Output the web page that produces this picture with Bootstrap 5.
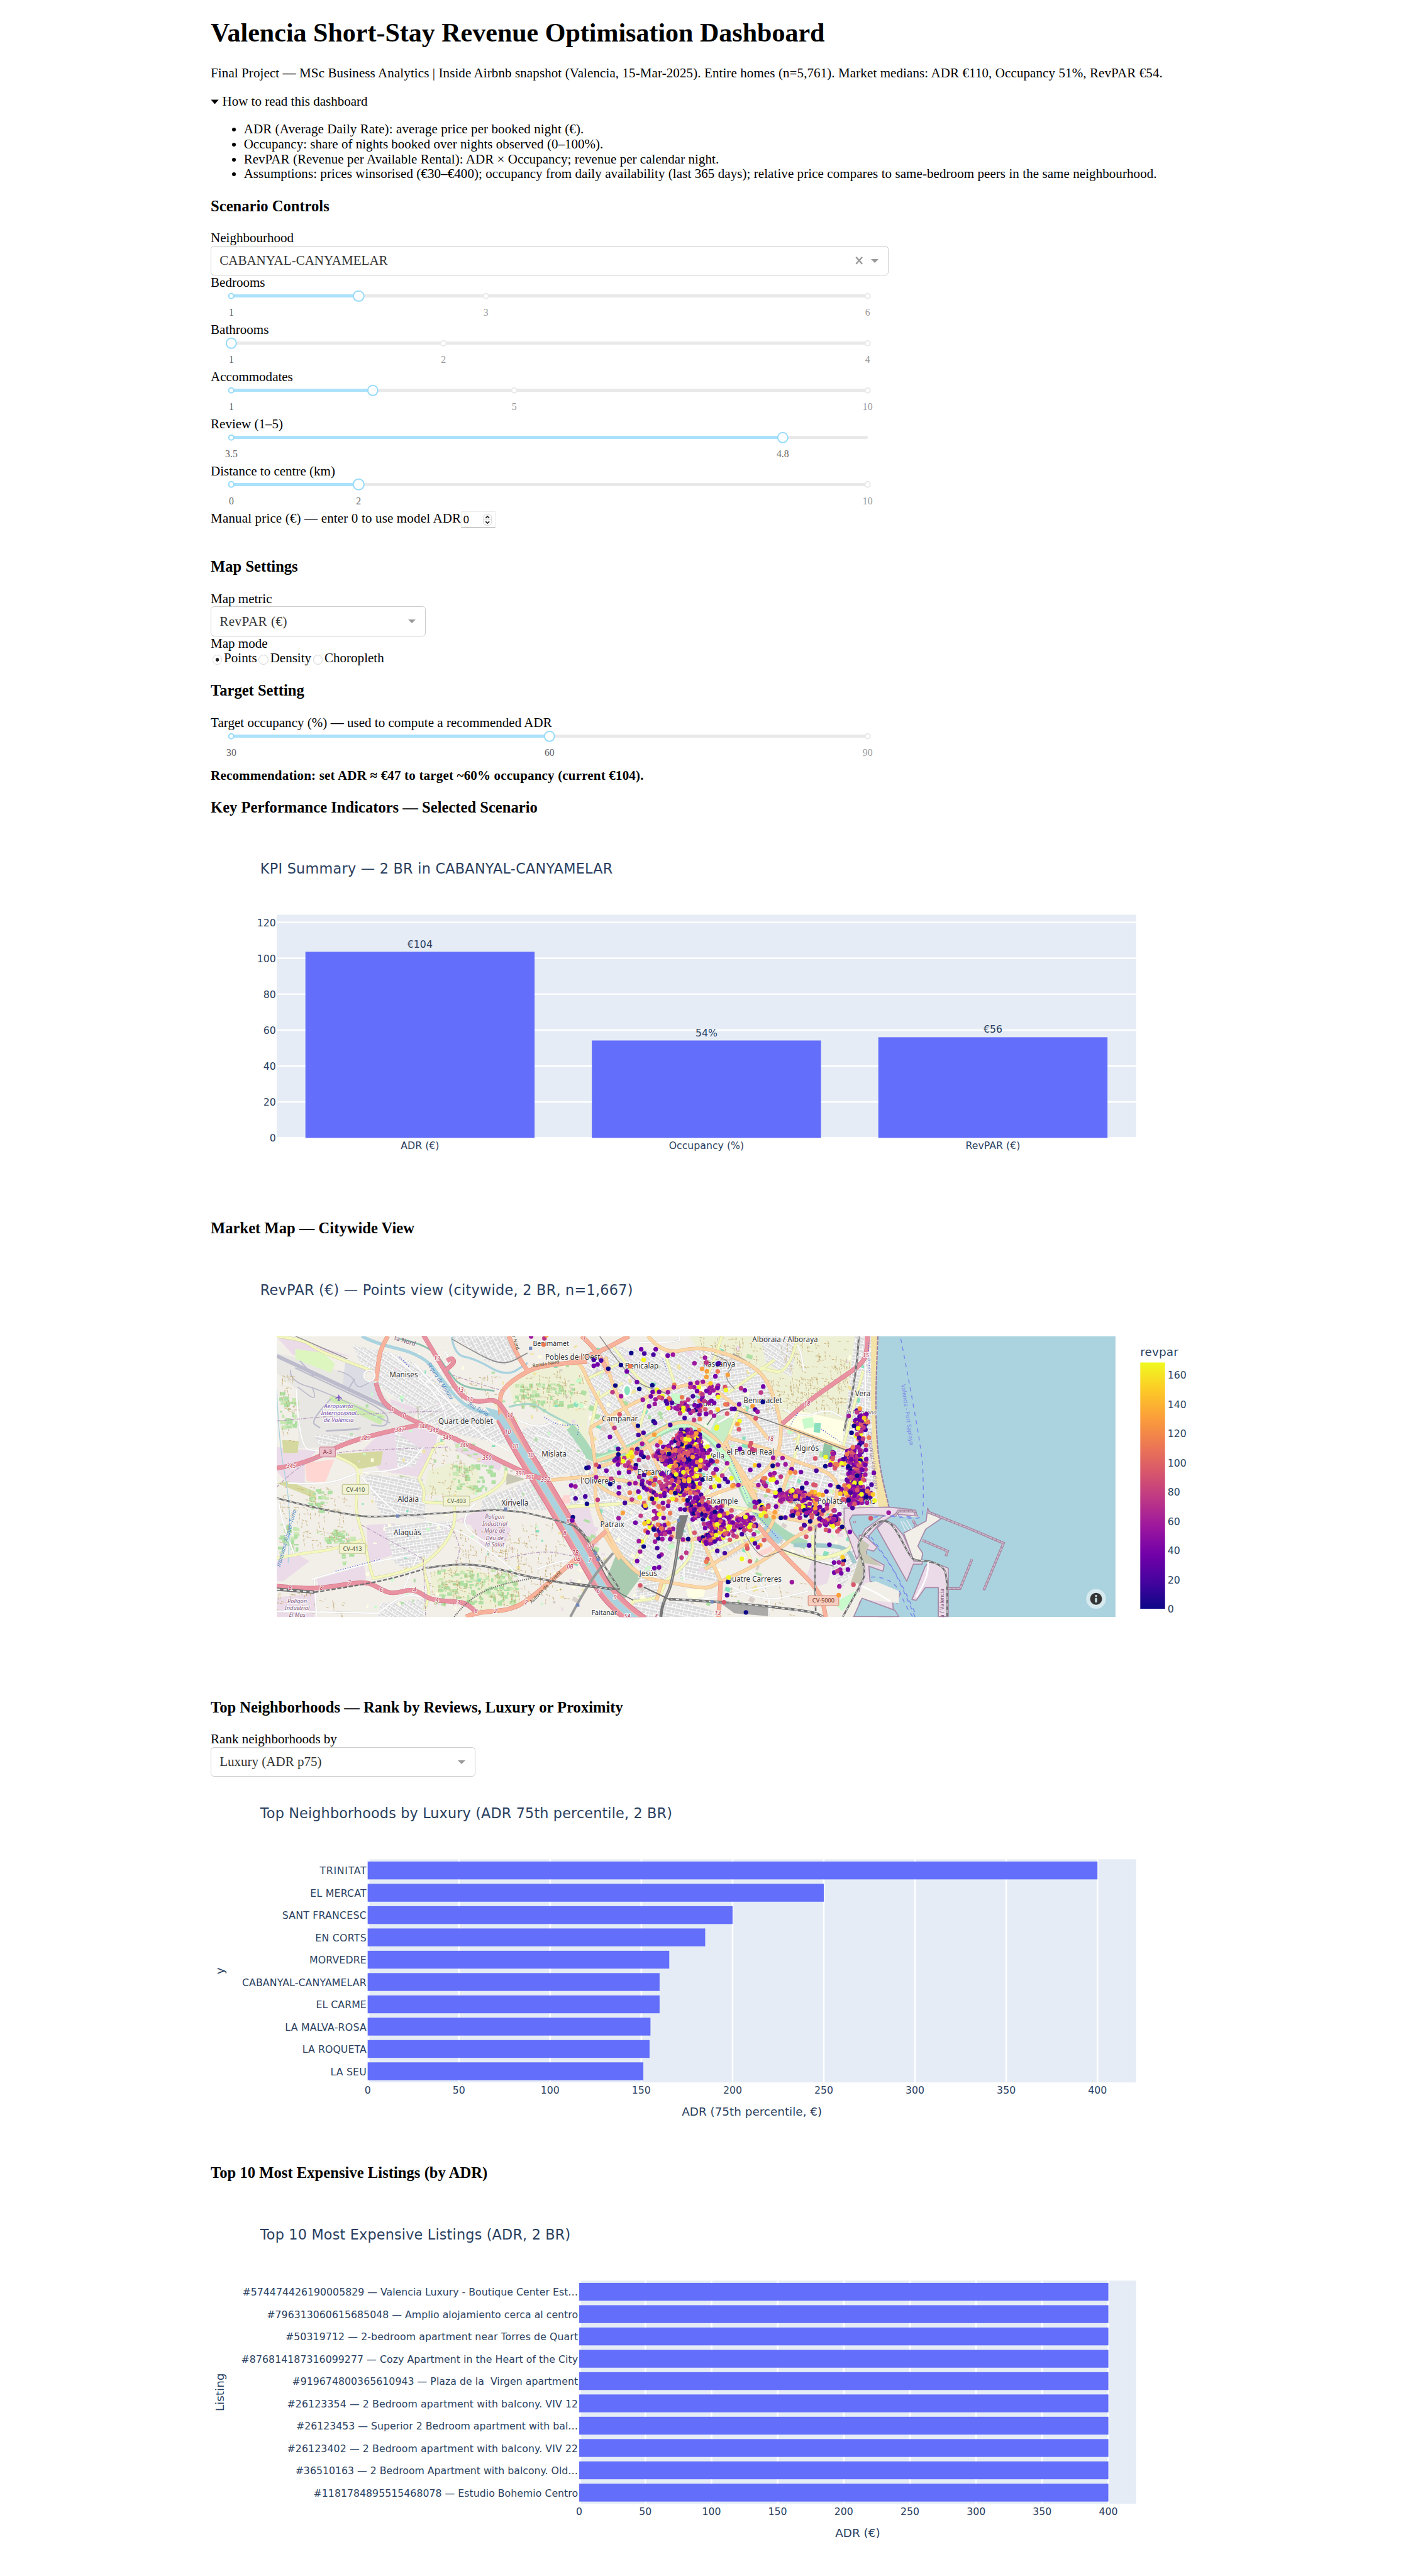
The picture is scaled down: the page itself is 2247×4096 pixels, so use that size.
<!DOCTYPE html>
<html lang="en">
<head>
<meta charset="utf-8">
<title>Valencia Short-Stay Revenue Optimisation Dashboard</title>
<link href="https://cdn.jsdelivr.net/npm/bootstrap@5.3.0/dist/css/bootstrap.min.css" rel="stylesheet">
<style>
/* 1rem = 10 layout units */
html{font-size:13.1404px}
body{font-family:"Liberation Serif",serif;font-size:1.6rem;line-height:1.8rem;color:#000;background:#fff}
.dash{width:120rem;max-width:none}
h1.title-main{font-size:3.2rem;line-height:3.7rem;font-weight:700;margin:2.144rem 0}
h3.sec{font-size:1.872rem;line-height:2.2rem;font-weight:700;margin:1.872rem 0}
.fit{white-space:nowrap}
.intro{margin:0 0 1.6rem}
.how summary{margin-bottom:1.6rem;list-style:none}
.how summary svg{width:1rem;height:.6rem;margin-right:.4rem}
.how ul{padding-left:4rem;margin:0}
.controls{width:82rem}
.pick{height:3.6rem;border:1px solid #ccc;border-radius:.4rem;padding:.05rem 1.1rem 0 1rem;color:#333}
.pick .tri{width:0;height:0;border:.5rem solid transparent;border-top-color:#999;border-bottom-width:0}
.pick svg{width:.95rem;height:.95rem;margin-right:.95rem}
.w26{width:26rem}.w32{width:32rem}
.sl{height:3.9rem;padding:.5rem 2.5rem 0}
.rail{position:relative;height:.4rem;background:#e9e9e9;border-radius:.6rem}
.fill{height:100%;background:#abe2fb;border-radius:.6rem}
.stop,.knob{position:absolute;border-radius:50%;background:#fff;transform:translate(-50%,-50%);top:50%}
.stop{width:.8rem;height:.8rem;border:.2rem solid #e9e9e9}
.stop.on{border-color:#96dbfa}
.knob{width:1.4rem;height:1.4rem;border:.2rem solid #96dbfa}
.tick{position:absolute;top:1.3rem;font-size:1.2rem;line-height:1.8rem;color:#999;transform:translateX(-50%)}
.tick.on{color:#666}
.manual{height:3.82rem;padding-top:.04rem}
.num{width:4.2rem;height:2rem;border:1px solid #ececec;border-bottom:1px solid #bbb;padding:0 .35rem 0 .2rem;font:1.25rem/1.9rem "Liberation Sans",sans-serif}
.num svg{width:1.1rem;height:1.45rem}
.modes{height:1.856rem}
.dot{width:1.2rem;height:1.2rem;border-radius:50%;border:1px solid #d8d8d8;background:radial-gradient(circle,#fff 40%,#f4f4f4);margin:.45rem .2rem 0 .2rem}
.dot.on{background:radial-gradient(circle,#222 0 26%,#fff 32%)}
.rec{padding-top:.68rem}
svg.plot{display:block;width:100%;font-family:"DejaVu Sans",Verdana,sans-serif;fill:#2a3f5f}
svg.plot text{white-space:pre}
</style>
<script src="https://cdn.jsdelivr.net/npm/bootstrap@5.3.0/dist/js/bootstrap.bundle.min.js"></script>
</head>
<body>
<main class="dash mx-auto overflow-hidden">
  <h1 class="title-main"><span class="fit" data-w="743">Valencia Short-Stay Revenue Optimisation Dashboard</span></h1>
  <p class="intro"><span class="fit" data-w="1152">Final Project — MSc Business Analytics | Inside Airbnb snapshot (Valencia, 15-Mar-2025). Entire homes (n=5,761). Market medians: ADR €110, Occupancy 51%, RevPAR €54.</span></p>
  <details class="how" open>
    <summary class="d-flex align-items-center"><svg viewBox="0 0 10 6"><path d="M.3.3h9.4L5 5.8z"/></svg><span class="fit" data-w="352">How to read this dashboard</span></summary>
    <ul>
      <li><span class="fit" data-w="411.5">ADR (Average Daily Rate): average price per booked night (€).</span></li>
      <li><span class="fit" data-w="435">Occupancy: share of nights booked over nights observed (0–100%).</span></li>
      <li><span class="fit" data-w="575">RevPAR (Revenue per Available Rental): ADR × Occupancy; revenue per calendar night.</span></li>
      <li><span class="fit" data-w="1105">Assumptions: prices winsorised (€30–€400); occupancy from daily availability (last 365 days); relative price compares to same-bedroom peers in the same neighbourhood.</span></li>
    </ul>
  </details>

  <section class="controls">
    <h3 class="sec">Scenario Controls</h3>
    <div>Neighbourhood</div>
    <div class="pick d-flex align-items-center"><span class="me-auto">CABANYAL-CANYAMELAR</span>
      <svg viewBox="0 0 9 9" stroke="#999" stroke-width="1.7"><path d="M1 .5 8 8.5M8 .5 1 8.5"/></svg><i class="tri"></i></div>
    <div>Bedrooms</div><div class="sl" data-v="20" data-m="0:1,40:3,100:6"></div>
    <div>Bathrooms</div><div class="sl" data-v="0" data-m="0:1,33.333:2,100:4"></div>
    <div>Accommodates</div><div class="sl" data-v="22.222" data-m="0:1,44.444:5,100:10"></div>
    <div>Review (1–5)</div><div class="sl" data-v="86.667" data-m="0:3.5,86.667:4.8"></div>
    <div>Distance to centre (km)</div><div class="sl" data-v="20" data-m="0:0,20:2,100:10"></div>
    <div class="manual d-flex align-items-start"><span class="fit" data-w="303">Manual price (€) — enter 0 to use model ADR</span>
      <span class="num d-flex align-items-center justify-content-between">0
        <svg viewBox="0 0 11 14.5"><rect x=".5" y=".5" width="10" height="13.5" rx="4.5" fill="#fff" stroke="#ddd"/><path d="M.5 7.2h10" stroke="#ddd"/><path d="M3.3 5.3 5.5 3 7.7 5.3M3.3 9.2 5.5 11.5 7.7 9.2" fill="none" stroke="#222" stroke-width="1.3"/></svg></span>
    </div>
    <h3 class="sec">Map Settings</h3>
    <div>Map metric</div>
    <div class="pick w26 d-flex align-items-center"><span class="me-auto fit" data-w="82">RevPAR (€)</span><i class="tri"></i></div>
    <div>Map mode</div>
    <div class="modes d-flex"><i class="dot on"></i><span>Points</span><i class="dot"></i><span>Density</span><i class="dot"></i><span>Choropleth</span></div>
    <h3 class="sec">Target Setting</h3>
    <div><span class="fit" data-w="413">Target occupancy (%) — used to compute a recommended ADR</span></div>
    <div class="sl" data-v="50" data-m="0:30,50:60,100:90"></div>
    <div class="rec fw-bold"><span class="fit" data-w="524">Recommendation: set ADR ≈ €47 to target ~60% occupancy (current €104).</span></div>
  </section>

  <h3 class="sec"><span class="fit" data-w="395.5">Key Performance Indicators — Selected Scenario</span></h3>
  <svg class="plot" id="kpi" viewBox="0 0 1200 450"></svg>
  <h3 class="sec"><span class="fit" data-w="246.5">Market Map — Citywide View</span></h3>
  <svg class="plot" id="map" viewBox="0 0 1200 520"></svg>
  <h3 class="sec"><span class="fit" data-w="499">Top Neighborhoods — Rank by Reviews, Luxury or Proximity</span></h3>
  <div>Rank neighborhoods by</div>
  <div class="pick w32 d-flex align-items-center"><span class="me-auto">Luxury (ADR p75)</span><i class="tri"></i></div>
  <svg class="plot" id="lux" viewBox="0 0 1200 450"></svg>
  <h3 class="sec"><span class="fit" data-w="335">Top 10 Most Expensive Listings (by ADR)</span></h3>
  <svg class="plot" id="top" viewBox="0 0 1200 450"></svg>
</main>

<script>
// Sliders
document.querySelectorAll('.sl').forEach(s=>{
  const v=+s.dataset.v;let h=`<div class="rail"><div class="fill" style="width:${v}%"></div>`;
  s.dataset.m.split(',').forEach(m=>{const [p,t]=m.split(':'),on=+p<=v?' on':'';
    h+=`<i class="stop${on}" style="left:${p}%"></i><span class="tick${on}" style="left:${p}%">${t}</span>`});
  s.innerHTML=h+`<i class="knob" style="left:${v}%"></i></div>`;
});
// Spread a line's letters to its column width
const U=13.1404/10;
document.querySelectorAll('.fit[data-w]').forEach(e=>{
  const d=e.dataset.w*U-e.getBoundingClientRect().width,k=d/e.textContent.length;
  if(Math.abs(k)<1)e.style.letterSpacing=k+'px';
});
const T=(x,y,s,size,o='')=>`<text x="${x}" y="${y}" font-size="${size}" ${o}>${s}</text>`;
const R=(x,y,w,h,f)=>`<rect x="${x}" y="${y}" width="${w}" height="${h}" fill="${f}"/>`;
const title=(s,w)=>T(60,50.4,s,17,`textLength="${w}"`);
// KPI chart
(()=>{let h=title('KPI Summary — 2 BR in CABANYAL-CANYAMELAR',426.5)+R(80,100,1040,270,'#e5ecf6');
 for(let v=0;v<=120;v+=20){const y=370-v*2.1725;h+=R(80,y-1,1040,v?2:1,'#fff')+T(79,y+4.5,v,12,'text-anchor="end"')}
 [['ADR (€)',103.6,'€104'],['Occupancy (%)',54.2,'54%'],['RevPAR (€)',56,'€56']].forEach(([n,v,l],i)=>{
  const c=80+346.667*(i+.5),y=370-v*2.1725;h+=R(c-138.67,y,277.33,v*2.1725,'#636efa')+T(c,y-5.2,l,12,'text-anchor="middle"')+T(c,383.8,n,12,'text-anchor="middle"')});
 kpi.innerHTML=h})();
// Horizontal bar charts
function hbar(id,ttl,tw,x0,k,names,vals,xl,yl){
 let h=title(ttl,tw)+R(x0,100,1120-x0,270,'#e5ecf6');
 for(let v=0;v<=400;v+=50){h+=R(x0+v*k-(v?1:0),100,2,270,'#fff')+T(x0+v*k,383.6,v,12,'text-anchor="middle"')}
 names.forEach((n,i)=>{h+=R(x0,102.7+27*i,vals[i]*k,21.6,'#636efa')+T(x0-1.5,118.3+27*i,n[0],12,`text-anchor="end" textLength="${n[1]}"`)});
 h+=T((x0+1120)/2,410.4,xl,14,`text-anchor="middle"`)+`<text transform="translate(16 235) rotate(-90)" font-size="14" text-anchor="middle">${yl}</text>`;
 document.getElementById(id).innerHTML=h}
hbar('lux','Top Neighborhoods by Luxury (ADR 75th percentile, 2 BR)',498.5,190,2.208,
 [['TRINITAT',56.5],['EL MERCAT',68],['SANT FRANCESC',102],['EN CORTS',62],['MORVEDRE',69],['CABANYAL-CANYAMELAR',150.5],['EL CARME',61],['LA MALVA-ROSA',98.5],['LA ROQUETA',77.5],['LA SEU',43.5]],
 [400,250,200,185,165.3,160,160,155,154.5,151.1],'ADR (75th percentile, €)','y');
hbar('top','Top 10 Most Expensive Listings (ADR, 2 BR)',375.5,446,1.601,
 [['#574474426190005829 — Valencia Luxury - Boutique Center Est…',406],['#796313060615685048 — Amplio alojamiento cerca al centro',376.5],['#50319712 — 2-bedroom apartment near Torres de Quart',354],['#876814187316099277 — Cozy Apartment in the Heart of the City',407.5],['#919674800365610943 — Plaza de la  Virgen apartment',346],['#26123354 — 2 Bedroom apartment with balcony. VIV 12',352],['#26123453 — Superior 2 Bedroom apartment with bal…',341],['#26123402 — 2 Bedroom apartment with balcony. VIV 22',352],['#36510163 — 2 Bedroom Apartment with balcony. Old…',342],['#1181784895515468078 — Estudio Bohemio Centro',320]],
 Array(10).fill(400),'ADR (€)','Listing');

// ---- Market map: three survey sheets (west, centre, east) projected on one frame
let seed=7;const rnd=()=>(seed=(seed*16807)%2147483647)/2147483647;
const P={A:[.28699,-35],B:[.2551,355],C:[.28699,705]};
const px=(s,x,y)=>[+(x*P[s][0]+P[s][1]).toFixed(1),+(y*.24235-16).toFixed(1)];
const pts=(s,str)=>str.trim().split(/\s+/).map(q=>px(s,...q.split(',').map(Number)));
const poly=(s,str,f,o='')=>`<polygon points="${pts(s,str).join(' ')}" fill="${f}" ${o}/>`;
// smoothed line through the given vertices
const path=(s,str)=>{const p=pts(s,str);let d='M'+p[0];for(let i=1;i<p.length-1;i++)d+=`Q${p[i]} ${(p[i][0]+p[i+1][0])/2},${(p[i][1]+p[i+1][1])/2}`;return d+'L'+p[p.length-1]};
const ln=(s,str,c,w,o='')=>`<path d="${path(s,str)}" fill="none" stroke="${c}" stroke-width="${w}" stroke-linejoin="round" ${o}/>`;
let m='<defs><clipPath id="frame"><rect width="1015" height="340"/></clipPath>';
[[0,12,5],[1,-28,4.6],[2,33,4.2],[3,62,5.2],[4,-8,4.4]].forEach(([i,a,s])=>m+=`<pattern id="g${i}" width="${s*2}" height="${s*1.5}" patternUnits="userSpaceOnUse" patternTransform="rotate(${a})"><rect width="20" height="20" fill="#dcdbdc"/><path d="M0 0H20M0 ${s*.75}H20M0 0V20M${s*1.25} 0V${s*.75}" stroke="#fff" stroke-width="1.2"/></pattern>`);
m+='<linearGradient id="bar" x1="0" y1="1" x2="0" y2="0">'+['0d0887','46039f','7201a8','9c179e','bd3786','d8576b','ed7953','fb9f3a','fdca26','f0f921'].map((c,i)=>`<stop offset="${i/9}" stop-color="#${c}"/>`).join('')+'</linearGradient></defs>';
m+=title('RevPAR (€) — Points view (citywide, 2 BR, n=1,667)',451);
m+='<g transform="translate(80 100)" clip-path="url(#frame)">'+R(0,0,1015,340,'#f2efe9');
// fields
const field='#eef0d5',ind='#ebdbe8';
m+=poly('B','560,66 1360,66 1300,540 1000,500 890,220 600,120',field)+poly('A','1100,300 1190,240 1400,190 1450,300 1430,520 1440,640 1380,560 1290,480 1180,400 1120,400',field)
+poly('A','770,1250 880,1210 1140,1290 1150,1400 960,1440 900,1390 780,1350',field)+poly('A','850,700 975,720 970,860 740,860 760,740',field)+poly('B','1000,1140 1150,1030 1330,1010 1400,1300 1300,1468 900,1468 720,1300','#f2efe9');
// industry
['122,70 230,90 440,170 320,150 190,160','122,620 290,640 240,700 240,800 165,800 122,740','560,550 720,520 800,560 790,610 720,770 560,740 480,640','860,560 1080,690 1060,740 880,640','122,1190 200,1150 260,1190 150,1290 122,1290','500,1010 620,1000 610,1160 510,1200','870,990 990,930 1110,1030 1080,1120 990,1120 940,1010','290,1280 490,1210 500,1280 300,1320','1320,930 1440,920 1480,1110 1420,1130 1360,1000','122,1370 290,1350 280,1468 122,1468','600,380 720,430 700,470 610,430'].forEach(q=>m+=poly('A',q,ind));
// airport
m+=poly('A','122,150 250,190 540,300 600,400 700,450 700,510 380,620 215,625 205,330 122,250','#e8e7e3')
+poly('A','410,200 480,210 560,330 580,400 400,310','#dcdce4')
+poly('A','355,360 580,465 560,510 340,385','#cdebb0')+poly('A','200,130 320,150 368,205 350,250 200,180','#ddf6c0')
+ln('A','122,165 600,430','#bbbbcc',4.6)+ln('A','200,225 340,305 590,440 590,520 520,510','#bbbbcc',1.6)+ln('A','180,235 175,290 330,345 600,500','#bbbbcc',1.4)+ln('A','270,320 300,400 210,320','#bbbbcc',1.2)+ln('A','330,540 470,530','#bbbbcc',2)+ln('A','350,380 260,490 305,525','#bbbbcc',1.6)+ln('A','380,240 440,260 460,330 510,300','#bbbbcc',1.2)+ln('A','220,190 280,270','#bbbbcc',1.5)+ln('A','450,280 420,340','#bbbbcc',1.5);
// patches of scrub, retail and brownfield
[['A','375,655 570,640 560,710 470,730','#d6d99f'],['A','145,585 215,590 210,650 150,650','#d6d99f'],['A','122,800 290,880 280,840 170,790','#d6d99f'],['A','240,700 365,682 325,800 248,790','#ffd6d1'],['A','710,410 810,450 790,480 720,488','#c7c7b4'],['A','1090,750 1170,780 1090,810','#c7c7b4'],['A','640,760 705,780 700,815 640,800','#c2d3a8'],['A','1330,860 1370,860 1360,900 1320,905','#ffd6d1'],['A','1000,66 1110,66 1110,150 1050,110','#e3cfd2']].forEach(a=>m+=poly(...a));
// built-up areas
[['A','440,110 600,150 700,200 830,330 850,400 700,420 620,380 545,300 470,190',2],['A','720,420 860,400 1000,430 1060,530 1130,620 900,560 720,480',1],['A','850,66 1100,66 1150,180 1080,210 1000,190 930,120',3],['A','1130,540 1290,490 1430,620 1460,715 1270,775 1190,640',2],['A','990,880 1200,780 1260,935 980,930',3],['A','490,755 740,780 750,980 560,960',0],['A','570,1010 870,990 860,1050 740,1180 680,1240 620,1200',4],['A','280,560 450,560 450,600 300,610',0],['A','560,1400 740,1380 740,1468 550,1468',2],['A','620,540 740,640 700,720 630,720',0],
['B','60,150 180,110 440,150 640,120 720,150 640,290 470,350 350,400 160,480 100,400',2],['B','150,480 400,350 660,300 760,400 600,500 420,540 270,640 120,680',1],['B','0,700 130,690 280,650 420,560 470,700 440,860 330,900 0,905',3],['B','440,560 560,490 720,610 800,760 700,860 560,900 440,860 420,700',2],['B','640,290 720,150 900,230 1000,500 950,630 740,600 680,450',4],['B','740,600 950,630 1270,760 1270,900 1150,970 880,920',0],['B','1000,510 1310,630 1270,760 1060,690 990,640',4],['B','1300,540 1350,66 1440,66 1440,920 1300,1000 1270,900 1290,640',0],['B','120,900 440,870 540,900 500,1080 450,1290 240,1180 160,1030',2],['B','540,890 860,930 940,1060 720,1200 620,1070 520,1080',3],['B','530,1090 620,1080 710,1290 520,1280',0],['B','330,1270 440,1290 400,1468 300,1390',4],['B','1240,1150 1350,1100 1370,1200 1290,1330 1240,1250',1],['B','270,1400 540,1390 680,1440 680,1468 270,1468',0],['B','700,940 860,930 960,1060 850,1100',1],['B','900,66 1080,66 1050,270 930,200',2]].forEach(([s,q,g])=>m+=poly(s,q,`url(#g${g})`));
// small plots of gardens, schools and courts
const cols=['#aedfa3','#c8facc','#ffffe5','#ffffe5','#88e0be','#f0e4a0','#d9d0c9','#ebdbe8'];
for(let i=0;i<420;i++){const x=rnd()*1380+10,y=rnd()*1300+110;if(x>900&&y>1150||x>870&&x<1300&&y<500)continue;const [a,b]=px('B',x,y);m+=`<rect x="${a}" y="${b}" width="${(2+rnd()*6).toFixed(1)}" height="${(2+rnd()*4.5).toFixed(1)}" fill="${cols[i%8]}" transform="rotate(${[20,-25,30,10][i%4]} ${a} ${b})"/>`}
[[125,330,75,190],[125,1000,80,150],[290,1030,150,70],[390,1140,40,70],[860,700,170,130],[790,1230,340,170],[240,830,100,100],[1120,300,250,110],[870,600,80,70]].forEach(([x,y,w,h])=>{for(let i=0;i<w*h/420;i++){const [a,b]=px('A',x+rnd()*w,y+rnd()*h);m+=R(a,b,(2+rnd()*5).toFixed(1),(1.5+rnd()*4).toFixed(1),i%3?'#aedfa3':'#c9e7b3')}});
for(let i=0;i<170;i++){const [a,b]=px('A',430+rnd()*980,150+rnd()*1290);m+=R(a,b,(1.5+rnd()*3).toFixed(1),(1.5+rnd()*3).toFixed(1),cols[i%8])}
// farm tracks
const track=(s,x,y,w,h,n)=>{let d='';for(let i=0;i<n;i++){const [a,b]=px(s,x+rnd()*w,y+rnd()*h),v=rnd()<.5;d+=`M${a} ${b}l${v?(2+rnd()*6).toFixed(1):(rnd()*3-1).toFixed(1)} ${v?(rnd()*2).toFixed(1):(4+rnd()*7).toFixed(1)}`}return `<path d="${d}" stroke="#bfa468" stroke-width=".6" stroke-dasharray="3 1.4" fill="none"/>`};
m+=track('B',600,70,300,120,60)+track('B',920,270,370,170,130)+track('B',1000,90,330,230,90)+track('A',860,1020,300,170,70)+track('A',760,1220,390,200,120)+track('A',130,820,300,300,90)+track('A',850,260,200,110,30)+track('A',760,620,210,230,60)+track('A',1150,230,270,200,80)+track('A',1140,1000,200,380,80)+track('A',130,250,70,350,30)+track('A',120,1320,300,140,30)+track('B',740,1290,380,170,30);
// special grounds
m+=poly('B','1010,505 1090,440 1300,490 1290,630 1150,570','#ffffe5')+poly('B','1100,480 1150,470 1160,520 1110,530','#c8facc')+poly('B','1160,500 1190,500 1185,550 1155,545','#88e0be')+poly('B','1205,600 1245,610 1240,690 1195,670','#8fc3a4')
+poly('B','225,1140 290,1200 335,1270 250,1390 190,1350 175,1270','#aacbaf')+poly('B','700,460 780,480 740,600 650,570','#c8ecc4')+poly('B','480,350 540,360 540,410 490,415','#c8facc')
+poly('B','550,1330 640,1330 635,1370 560,1370','#ffffe5')+poly('B','880,1150 960,1110 960,1140 900,1170','#ffd6d1')+poly('B','770,150 840,190 780,185','#999')+poly('B','1150,1180 1240,1220 1220,1300 1160,1320 1120,1270',ind)+poly('B','1250,1400 1370,1330 1360,1360 1290,1440','#c8facc');
m+=`<ellipse cx="424" cy="66" rx="4.5" ry="6.5" fill="#88e0be" stroke="#fff" stroke-width="2"/>`;
// minor white roads
[['A','470,745 650,750 740,620'],['A','480,770 540,860 640,960'],['A','170,800 330,810 460,750'],['A','205,330 215,625 300,640'],['A','600,150 760,300 850,470 800,580'],['A','740,310 860,200 830,140'],['A','700,200 850,400 980,560 1100,640'],['A','1160,760 1400,620 1210,560'],['A','1130,480 1210,530 1300,490'],['A','270,1280 500,1200 730,1150'],['A','280,1280 290,1468'],['A','740,990 870,1010 1090,1200 1160,1290'],['A','650,1350 720,1150'],['A','560,1440 650,1350 740,1370'],['A','960,900 880,990 1000,1100 1090,1120'],['A','200,1170 150,1010 130,900'],['A','122,1440 560,1450'],['A','1220,1230 1330,1180 1400,1190'],
['B','170,490 400,350 540,300'],['B','330,100 520,100 520,66'],['B','200,830 200,1030 330,1100'],['B','0,910 210,880'],['B','170,1040 350,940 480,900'],['B','620,900 720,1100 860,1060'],['B','830,420 700,500'],['B','950,66 1080,66 1110,240'],['B','850,1230 950,1350 940,1468'],['B','740,1300 900,1400 1130,1340'],['B','780,640 900,690 1000,880'],['B','1140,580 1060,830 1000,1000'],['B','1220,700 1160,900 1130,1010'],['B','1400,66 1400,920'],['B','1360,480 1350,900'],['B','560,750 680,560'],['B','540,1090 540,1290'],['B','1010,430 1090,480 1220,430 1290,470'],['B','1110,960 1060,1170 1280,1210'],['B','620,1380 740,1360 1000,1300']].forEach(([s,q])=>m+=ln(s,q,'#cfcfcf',2.2)+ln(s,q,'#fff',1.8));
// rivers
m+=ln('A','480,66 530,100 740,160 830,300 890,390 960,440 1060,470','#aad3df',4)+ln('A','640,80 770,110 850,250 900,320 1040,340','#8fc2b0',2.2)+poly('A','1000,420 1060,440 1075,500 1040,480','#aad3df')+ln('A','860,70 870,160 960,180 1090,270 1180,200','#aad3df',2.6)+ln('A','1100,420 1190,390 1260,450 1400,530 1430,680','#a9d6c9',2.4)+ln('A','122,330 130,600 180,900 170,1200','#aad3df',1);
// Turia gardens
m+=ln('B','0,520 60,600 110,690 270,640 400,560 500,505 580,510 660,560 740,660 810,790 850,900 930,990 1030,1070 1120,1110','#a9d9b8',11)+ln('B','110,690 270,640 400,560 500,505 580,510 660,560 740,660 810,790 850,900','#c8facc',6)+ln('B','920,1020 1000,1090','#aad3df',10)+ln('B','1060,1110 1240,1110 1320,1130 1350,1200','#a0c9cc',5);
// city roads: casing, then fill
const road=(list,fill,cas,w)=>{list.forEach(([s,q])=>m+=ln(s,q,cas,w+.7));list.forEach(([s,q])=>m+=ln(s,q,fill,w))};
road([['A','122,68 230,80 290,135 400,185 525,240'],['A','370,665 440,700 470,740 455,900 460,960 490,1080 510,1200 530,1280'],['A','530,1275 700,1240 820,1130 875,1010 870,900'],['A','720,780 760,690 790,605 830,600'],['A','745,895 850,905 970,885 1080,800 1090,740'],['A','722,780 745,820 740,895'],['A','122,1175 230,1150 350,1135 480,1085'],['A','740,1170 740,1230 770,1350 745,1430'],['A','1330,922 1568,905'],['A','1480,340 1455,480'],['A','1040,400 1130,480 1130,500 1070,520 1050,490'],
['B','0,915 330,900 450,880 540,870'],['B','130,380 90,560'],['B','455,170 500,320'],['B','720,66 690,170 640,290'],['B','205,120 290,240 400,360'],['B','750,350 970,185'],['B','1080,66 1040,262 900,225'],['B','800,430 740,600'],['B','300,1200 370,1050 440,900'],['B','640,900 860,930 1000,980 1290,1010'],['B','1390,240 1290,640'],['B','630,870 760,700'],['B','370,380 330,520'],['B','540,530 500,660'],['B','1090,540 1060,690'],['B','1290,1000 1340,1080 1320,1150 1170,1180 1150,1130 1150,1060'],['B','990,1135 1150,1190 1250,1160 1320,1130'],['B','290,1390 420,1385 450,1300'],['B','1290,1010 1340,930 1420,920'],['B','450,1290 600,1180 560,1000'],['B','650,1150 790,1080 850,1070'],['B','780,1010 860,1190'],['B','80,280 240,200'],['B','130,380 250,300'],['B','270,1468 300,1390']],'#f5f8bd','#c9cf9b',2.9);
road([['B','0,180 50,200 80,280 130,380 270,640 340,800 440,950 490,1060 540,1095 640,1065'],['B','170,170 180,270 290,490 370,600 430,760 530,900'],['B','95,525 125,700 115,900 175,1040 240,1170 340,1270 435,1290 600,1320 660,1325 715,1290 850,1230 990,1135 1060,1070 1170,1020'],['B','95,525 230,440 400,350 530,315 640,290 740,380 850,460 940,580'],['B','370,66 440,158 600,120 740,150 895,230 960,340 1000,500 1000,580 985,660 930,740 850,800'],['B','1000,510 1200,590 1310,630 1360,650'],['B','750,575 950,630 1060,690 1270,760 1265,900 1190,970 1130,1020'],['B','125,690 280,640 420,535 520,490 600,505 730,610 850,790 900,930'],['B','130,720 300,670 430,570'],['B','0,775 120,765 330,800 410,850'],['B','850,800 960,850 1150,900'],['B','850,795 700,845 570,910'],['B','740,600 780,700 880,900 950,960 1200,1010 1290,990'],['B','1060,690 1010,820 970,980 930,1060 850,1090 700,1190 640,1230'],['B','620,1070 715,1290'],['B','435,1290 410,1385'],['B','120,770 130,830 330,900'],['B','760,560 730,610'],['A','1280,785 1460,765'],['A','1500,1050 1568,1180'],['B','620,1070 860,930']],'#fcd6a4','#dcb07c',3.6);
road([['A','590,66 560,130 552,190 540,290'],['A','1100,66 1130,150 1180,240'],['A','1070,500 1055,380 1090,310 1180,240 1240,215 1390,195 1430,195'],['A','920,1468 960,1445 1110,1435 1200,1370 1420,1140 1510,1040'],['B','0,195 60,170 130,150 280,66'],['B','55,66 100,110 150,180 180,250'],['B','890,1010 990,1140 1190,1340 1212,1468'],['B','715,1290 704,1468'],['B','20,1200 90,1110']],'#f9b29c','#d98a70',4.6);
m+=ln('A','1080,470 1140,610 1230,780 1330,980 1420,1160 1500,1330 1580,1430 1660,1500','#d8707f',21)+ln('A','1080,470 1140,610 1230,780 1330,980 1420,1160 1500,1330 1580,1430 1660,1500','#e892a2',19.5)+ln('A','1070,440 1140,610 1230,780 1330,980 1420,1160 1500,1330 1580,1430 1660,1500','#f0b9a6',9.5)+ln('A','1060,460 1140,610 1230,780 1330,980 1420,1160 1500,1330 1580,1430 1660,1500','#aad3df',7.5);
road([['A','740,60 830,240 890,350 930,385 980,395 1050,380 1100,470'],['A','830,240 875,200 860,175 840,190'],['A','540,300 555,370 600,430 700,490 800,540 950,620 1080,700 1200,765 1270,785'],['A','122,725 190,715 300,670 400,605 560,550 720,510'],['A','122,1315 250,1330 370,1315 500,1290 560,1330 610,1355 700,1325 770,1385 870,1390 920,1400 965,1445'],['B','1410,66 1410,150 1380,210 1280,280 1120,400 1005,505']],'#e892a2','#cf6d80',4.8);
m+='<circle cx="112" cy="48" r="6.5" fill="#f2efe9" stroke="#c9c9c9" stroke-width="2.6"/><circle cx="112" cy="48" r="6.5" fill="none" stroke="#fff" stroke-width="1.8"/><circle cx="100" cy="164" r="3" fill="#f2efe9" stroke="#f5f8bd" stroke-width="2"/>';
// boundaries and cycleways
['122,490 300,470 560,450 830,440','122,820 230,690 400,640 620,630 850,620','860,260 960,300 1080,340','480,1010 740,1180','1080,1180 1230,1130 1390,1170','850,1010 900,1100 880,1200','740,1180 750,1468'].forEach(q=>m+=ln('A',q,'#b99bbd',1,'stroke-dasharray="4 1.5 1 1.5"'));
[['A','370,1240 560,1180'],['A','1250,470 1310,520 1400,500 1390,560'],['A','640,170 680,220'],['B','880,950 990,1080'],['B','740,620 850,900'],['B','1080,450 1040,520'],['B','1190,530 1290,600'],['B','1415,100 1420,250'],['B','440,180 460,240'],['B','1310,1000 1390,1100 1560,960']].forEach(([s,q])=>m+=ln(s,q,'#4a55e0',.9,'stroke-dasharray="1 2"'));
// railways
const rail=(s,q,w=2)=>m+=ln(s,q,'#707070',w)+ln(s,q,'#e8e8e8',w*.4,'stroke-dasharray="4 4"');
rail('A','122,875 430,970 640,965 870,945 1110,930 1300,985 1400,1020 1440,1100 1568,1330');rail('A','122,1330 280,1345',4);m+=ln('A','280,1345 420,1320 600,1280 740,1230','#707070',1.8,'stroke-dasharray="5 2"');rail('A','750,1225 850,1205 1000,1210 1200,1275 1450,1320 1568,1330',2.4);
m+=ln('A','870,1468 930,1380 1050,1310 1200,1275','#707070',1.6,'stroke-dasharray="1.2 1.2"')+ln('A','200,66 420,180','#8a8a8a',1)+ln('A','860,80 960,150 1080,215 1180,150','#8a8a8a',1.2)+ln('A','1360,1468 1440,1290 1540,1150','#999',3);
m+=poly('B','520,960 560,960 540,1030 530,1080 500,1080 505,1010','#7c7c7c')+ln('B','515,1080 490,1290 440,1400 430,1468','#777',3.6)+ln('B','515,1080 490,1290 440,1400','#bbb',.7);
rail('B','470,1380 700,1390 1150,1440 1200,1468',3);m+=poly('B','700,1390 940,1420 940,1465 780,1450','#999','opacity=".8"')+ln('B','350,1320 480,1385','#707070',1.5);
rail('B','1370,66 1360,250 1300,540',2.2);rail('B','1165,1010 1160,1200 1165,1440',2);
m+=ln('B','140,66 210,170 320,310 470,350 490,410 580,410','#8a8a8a',1.1)+ln('B','650,510 710,410 860,460 1000,510 1200,590 1320,640','#707070',1.1)+ln('B','670,155 790,200 730,270 780,330','#8a8a8a',.9)+ln('B','790,960 880,1190 1000,1140','#8a8a8a',.9)+ln('B','1000,1130 1160,1190 1250,1215','#707070',1.1)+ln('B','0,1000 70,1060 130,1180 200,1330 300,1385','#707070',1.1)+ln('B','0,1300 200,1330','#707070',3)+ln('B','0,1300 200,1330','#ddd',1,'stroke-dasharray="3 3"');
// sea, harbour
m+=poly('C','78,66 70,300 70,500 82,700 125,920 225,932 250,970 120,965 60,985 0,1060 0,1468 1200,1468 1200,66','#aad3df')
+poly('C','50,66 80,66 72,300 70,500 84,700 125,920 80,922 58,700 50,400','#f3e3a8')
+ln('C','78,66 70,300 70,500 82,700 125,920','#9d7fa6',1.6,'stroke-dasharray="5 1"');
const quay=(s,q,f=ind)=>m+=poly(s,q,f,'stroke="#a88aa8" stroke-width="1.3" stroke-linejoin="round"');
quay('B','1300,925 1510,920 1620,932 1650,965 1540,955 1470,1000 1420,1060 1360,1180 1300,1010');
quay('B','1325,985 1340,960 1420,958 1490,962 1440,1000 1400,1030 1370,1085 1340,1040','#aad3df');
quay('C','0,1060 30,1070 75,1120 60,1140 30,1130 30,1160 105,1210 100,1240 40,1215 45,1290 140,1340 170,1355 160,1400 140,1380 145,1468 80,1468 0,1425');
m+=poly('B','1370,1070 1420,1110 1400,1150 1480,1215 1400,1200 1380,1300 1330,1300 1370,1180','#c7c7b4')+poly('B','1290,1468 1400,1300 1450,1290 1560,1340 1560,1400 1380,1380 1330,1468','#f2efe9');
quay('B','1385,1375 1540,1435 1560,1468 1345,1468','#aad3df');
quay('C','75,1025 110,985 150,1010 185,1060 230,1180 265,1190 265,1205 228,1205 200,1290');
quay('C','288,925 296,945 345,978 280,1030 268,1060 247,1115 267,1150 262,1190 230,1190 187,1050 282,990','#f2efe9');
quay('C','278,1215 300,1190 375,1225 375,1468 333,1468 333,1322 278,1322 240,1385 222,1382');
['C|290,945 470,1030 608,1100 525,1335','C|375,1327 425,1327 475,1180','C|265,1085 372,1140 365,1165','C|150,965 165,940 235,940 240,965','C|225,985 240,1015','B|1350,990 1350,1000'].forEach(z=>{const [s,q]=z.split('|');const d='M'+pts(s,q).join('L');m+=`<path d="${d}" fill="none" stroke="#a3839f" stroke-width="3.2"/><path d="${d}" fill="none" stroke="#cdb6c8" stroke-width="1.6" stroke-dasharray="4 1"/>`});
m+=ln('C','175,990 195,1040','#e8eef0',1)+ln('C','185,990 210,1035','#e8eef0',1)+ln('C','200,985 222,1030','#e8eef0',1)+ln('C','290,1195 293,1255 240,1370','#fff',2)+ln('C','0,1310 60,1340 130,1390','#fff',2);
rail('C','-70,1468 0,1320 25,1260 15,1190 -10,1120 10,1070 70,1000 110,983 150,1020 215,1170 240,1188 295,1188 350,1215 370,1260 370,1468',2.2);
[['C','175,80 205,260 265,660 270,800 270,960 250,980 120,965'],['C','35,1060 130,1200 180,1320 235,1468'],['C','50,1270 90,1265 160,1310 190,1400 225,1468'],['C','60,970 120,960 230,970'],['C','50,1070 140,1210 240,1460']].forEach(([s,q])=>m+=ln(s,q,'#7c86ea',1.1,'stroke-dasharray="5 5"'));
// map lettering
const L=(s,x,y,t,z,c='#333',o='')=>{const [a,b]=px(s,x,y);return `<text x="${a}" y="${b}" font-size="${z}" fill="${c}" text-anchor="middle" stroke="#fff" stroke-opacity=".8" stroke-width="1.6" paint-order="stroke" ${o}>${t}</text>`};
const LR=(s,x,y,t,z,c,r,o='')=>{const [a,b]=px(s,x,y);return `<text transform="translate(${a} ${b}) rotate(${r})" font-size="${z}" fill="${c}" text-anchor="middle" ${o}>${t}</text>`};
m+='<g font-family="Noto Sans, sans-serif">';
[['A',657,273,'Manises'],['A',918,503,'Quart de Poblet'],['A',676,895,'Aldaia'],['A',673,1060,'Alaquàs'],['A',1126,912,'Xirivella'],['A',1291,667,'Mislata'],['A',1278,114,'Benimàmet',8],['A',1370,183,'Pobles de l\'Oest'],['A',1503,1458,'Faitanar',8],['B',1020,97,'Alboraia / Alboraya'],['B',340,229,'Benicalap'],['B',707,219,'Rascanya'],['B',914,401,'Benimaclet'],['B',236,493,'Campanar'],['B',632,415,'Saïdia'],['B',1388,367,'Vera'],['B',1123,641,'Algirós'],['B',855,657,'el Pla del Real'],['B',640,677,'Ciutat Vella'],['B',403,760,'Extramurs'],['B',132,804,'l\'Olivereta'],['B',714,903,'l\'Eixample'],['B',1310,904,'Poblats Marítims'],['B',200,1020,'Patraix'],['B',370,1263,'Jesús'],['B',872,1293,'Quatre Carreres'],['B',598,790,'València',10.5]].forEach(([s,x,y,t,z])=>m+=L(s,x,y,t,z||8.9));
const it='font-style="italic"';
[[383,425,'Aeropuerto'],[383,460,'Internacional'],[383,495,'de València']].forEach(a=>m+=L('A',...a,7.2,'#7a55b0',it));
m+='<path transform="translate(75 74.5)" d="M0-4 1-1.5 4 .5V1.3L1 .5.7 3 1.8 4V4.6L0 4-1.8 4.6V4L-.7 3-1 .5-4 1.3V.5L-1-1.5Z" fill="#8461c4"/>';
[[1041,979,'Polígon'],[1041,1014,'Industrial'],[1041,1049,'Mare de'],[1041,1084,'Déu de'],[1041,1118,'la Salut'],[208,1398,'Polígon'],[208,1433,'Industrial'],[208,1467,'El Mas']].forEach(a=>m+=L('A',...a,7,'#82587c',it));
m+=L('B',1382,456,'la Patacona',7,'#777',it);
m+=LR('A',660,100,'ta Nord',7.5,'#82587c',17)+LR('A',805,295,'Séquia de Mislata',6.6,'#4e88c4',57,it)+LR('A',968,440,'Riu Túria',7,'#4e88c4',30,it)+LR('A',170,1080,'Transvase Xúquer-Turia',7,'#4e88c4',-74,it)+LR('A',1258,212,'Ronda Nord',5.8,'#542',-9)+LR('A',1122,95,'or Nord',5.8,'#542',72)+LR('A',1260,1325,'Autovia de Torrent',6,'#542',-46)+LR('C',195,460,'Valencia - Port Saplaya',7,'#7c86ea',82)+LR('C',50,690,'Comunitat Valenciana',6.8,'#9678a0',83)+LR('C',358,1400,'a / Valencia',6.6,'#82587c',-90)+LR('B',1110,925,'Avinguda del Port',5.8,'#542',19);
[['A',797,186,13],['A',897,345,13],['A',937,392,11],['A',1106,470,11],['A',1096,555,10],['A',1127,628,10],['A',1192,672,10],['A',610,441,1],['A',660,474,0],['A',739,526,348],['A',785,546,348],['A',839,584,349],['A',912,621,349],['A',1008,682,350],['A',1146,762,351],['A',1187,780,351],['A',1255,794,352],['A',640,545,347],['A',495,586,345],['A',183,724,345],['A',178,1332,8],['A',310,1334,8],['A',428,1308,7],['A',562,1344,6],['A',703,1342,4],['A',798,1394,4],['A',888,1404,3],['A',962,1451,8],['A',1043,1449,2],['A',1174,1405,2],['A',1350,1002,8],['A',1336,1060,8],['A',1447,1123,'0A'],['A',1381,1158,'7B'],['A',1389,1190,'0B'],['A',1359,1225,'0B'],['A',1442,1195,7],['A',1478,1350,6],['B',212,1380,5],['B',272,1474,'5A'],['B',408,1474,4],['B',700,1458,13],['B',1403,172,15],['B',1124,412,18],['B',950,590,18],['B',68,85,1]].forEach(([s,x,y,t])=>m+=L(s,x,y,t,6.8,'#b3314f',it));
const shield=(s,x,y,t,w,f,st,c)=>{const [a,b]=px(s,x,y);m+=`<rect x="${a-w/2}" y="${b-6}" width="${w}" height="12" rx="1.5" fill="${f}" stroke="${st}"/>`+`<text x="${a}" y="${b+2.6}" font-size="7" text-anchor="middle" fill="${c}">${t}</text>`};
shield('A',336,645,'A-3',19,'#ecc0cb','#cf8799','#7a2a40');shield('A',454,832,'CV-410',32,'#f1f3d4','#c5ca98','#4c5030');shield('A',880,890,'CV-403',32,'#f1f3d4','#c5ca98','#4c5030');shield('A',441,1127,'CV-413',32,'#f1f3d4','#c5ca98','#4c5030');shield('B',1202,1387,'CV-5000',37,'#f7cdbf','#dd9c88','#6b3020');
[['A',632,965],['A',1086,930],['A',1192,128],['A',1465,1149],['A',1477,1181],['A',1391,1409],['B',516,986],['B',673,1393]].forEach(([s,x,y])=>{const [a,b]=px(s,x,y);m+=R(a-2,b-2,4,4,'#7589bb')});
m+='</g>';
// listings
const pal={n:'#0d0887',i:'#46039f',p:'#7201a8',m:'#9c179e',k:'#bd3786',r:'#d8576b',o:'#ed7953',a:'#fb9f3a',g:'#fdca26',y:'#f0f921'},mix='nniiiippppppmmmmmmkkkkkrrrrooagyyy';
let dots='';const dot=(x,y,c)=>{const [a,b]=px('B',x,y);dots+=`<circle cx="${a}" cy="${b}" r="2.8" fill="${pal[c]}"/>`};
[[540,710,170,200,170],[490,668,85,52,150],[555,585,68,50,110],[590,680,90,65,100],[550,790,85,85,85],[610,925,68,62,130],[690,960,85,55,65],[700,1040,90,55,60],[830,1000,58,48,50],[650,1085,45,20,22],[1340,690,65,70,85],[1360,770,50,75,75],[1350,860,75,62,90],[1382,500,38,75,38],[1375,600,30,60,14],[1245,990,62,48,48],[1050,865,70,38,50],[1130,930,120,50,50],[1245,690,45,48,20],[410,850,110,110,48],[430,1020,75,85,36],[590,430,105,75,48],[650,330,85,60,16],[290,680,90,65,26],[950,800,60,70,20],[1140,870,70,50,18],[430,390,70,70,14],[930,900,70,70,12]].forEach(([cx,cy,sx,sy,n])=>{for(let i=0;i<n;i++){const t=rnd()*6.283,r=Math.sqrt(rnd())*(.5+.65*rnd());dot(cx+Math.cos(t)*r*sx,cy+Math.sin(t)*r*sy,mix[Math.floor(rnd()*mix.length)])}});
`-185,68,m -122,77,k -112,62,a -126,109,o 112,185,i 147,188,i 112,215,p 130,208,p 181,229,n 241,211,n 285,217,o 269,243,p 290,151,n 337,132,p 352,153,i 349,185,y 395,159,i 406,132,p 463,164,p 488,159,m 215,313,n 201,346,k 242,366,m 317,296,p 328,330,n 390,312,n 235,457,r 210,525,k 189,570,p 345,384,m 322,514,n 348,549,i 324,560,i 342,604,m 396,492,n 403,500,i 460,403,i 475,510,i 640,174,m 647,198,k 590,202,m 700,205,n 705,202,i 626,230,a 649,242,a 700,243,o 748,260,a 647,270,a 689,267,p 666,302,g 602,341,p 570,321,k 630,294,m 494,310,o 492,322,m 422,345,p 464,346,m 735,320,r 739,335,y 703,370,y 811,327,k 829,337,p 916,318,p 905,348,k 914,395,n 866,416,a 878,433,i 889,444,m 881,477,r 802,407,p 804,490,y 794,506,a 801,532,r 745,453,r 768,430,p 780,430,i 694,527,y 697,520,y 858,600,r 853,615,r 876,635,r 865,632,k 806,630,p 877,711,g 896,712,i 855,734,p 745,701,m 697,692,o 745,407,r 737,407,o 765,776,y 748,794,i 735,780,i 707,786,y 685,817,y 775,810,o 798,810,m 770,815,a 1163,677,r 1008,675,m 963,674,m 1022,707,m 985,708,m 961,714,n 1051,731,p 1046,747,a 1068,747,o 1095,745,p 1168,738,i 1211,716,n 1121,800,p 1101,825,n 1164,811,r 1155,808,r 1160,845,g 1147,845,a 1181,857,g 1216,842,i 1235,811,p 1273,819,n 1282,853,g 1322,465,m 1347,515,n 1335,549,n 1361,447,k 1406,455,p 1412,495,o 1418,573,o 1395,475,g 1366,526,y 1403,635,p 1405,681,p 1441,749,p 1430,808,i 1437,857,g 1445,887,y 1410,840,o 1247,655,m 1341,621,o 1426,976,r 1511,948,m 1327,1044,p 1268,1041,r 1120,1068,r 1138,1028,k 1097,1028,r 1139,991,n 1112,1011,i 1134,1111,i 1230,1108,i 1252,1197,p 1275,1196,m 1298,1187,n 1293,1170,g 1294,1204,r 1281,1233,m 1253,1247,p 1268,1240,k 1286,1251,p 1318,1232,p 1277,1316,m 1344,1307,r 1274,1360,a 1052,1295,m 834,1446,n 730,1395,r 745,1360,i 749,1294,n 752,1271,y 815,1179,y 853,1191,r 734,1150,i 698,1139,i 651,1180,r 646,1193,o 551,1148,k 529,1172,k 434,1157,m 422,1166,i 413,1125,i 400,1225,p 422,1221,p 318,1189,p 332,1142,m 349,1117,n 339,1091,y 326,1090,m 333,1311,r 369,1047,p 310,998,p 353,1002,g 250,949,a 230,975,m 335,963,k 260,899,i 283,848,o 330,872,y 357,913,g 231,851,p 232,821,p 190,805,n 195,778,k 123,771,m 172,738,p 88,722,i 78,725,n 137,718,i 124,709,r 228,630,i 229,657,n 221,677,i 211,687,p 227,707,p 262,712,k 280,735,o 232,749,p 279,745,p 72,867,i 80,904,n 26,877,i 131,884,k 5,812,p 25,817,m 13,970,n 10,986,p 282,803,p 310,800,m 341,806,i 328,770,m 475,1080,p 536,1082,m 560,1080,n 590,1048,r 864,1083,y 920,1085,r 902,1110,a 877,1101,i 891,1120,m 838,1113,o 841,1127,r 872,1056,m 815,1055,i 965,970,a 971,946,a 905,962,y 930,965,o 1000,974,n 1021,972,i 1057,962,n 1110,1010,i 905,930,k 877,920,k`.split(/\s+/).forEach(q=>{const [x,y,c]=q.split(',');dot(+x,+y,c)});
m+=dots;
m+='<rect x="979.5" y="306" width="24" height="24" rx="12" fill="#fff" fill-opacity=".5"/><circle cx="991.5" cy="318" r="7.2" fill="#333"/><circle cx="991.5" cy="314.4" r="1.3" fill="#c4dee6"/><rect x="990.2" y="316.6" width="2.6" height="6" rx="1.3" fill="#c4dee6"/></g>';
// colour bar
m+=R(1125,132,30,298,'url(#bar)')+T(1125,123.8,'revpar',14,'textLength="46"');
for(let v=0;v<=160;v+=20)m+=T(1158,434.8-v*1.7705,v,12);
map.innerHTML=m;
</script>
</body>
</html>
